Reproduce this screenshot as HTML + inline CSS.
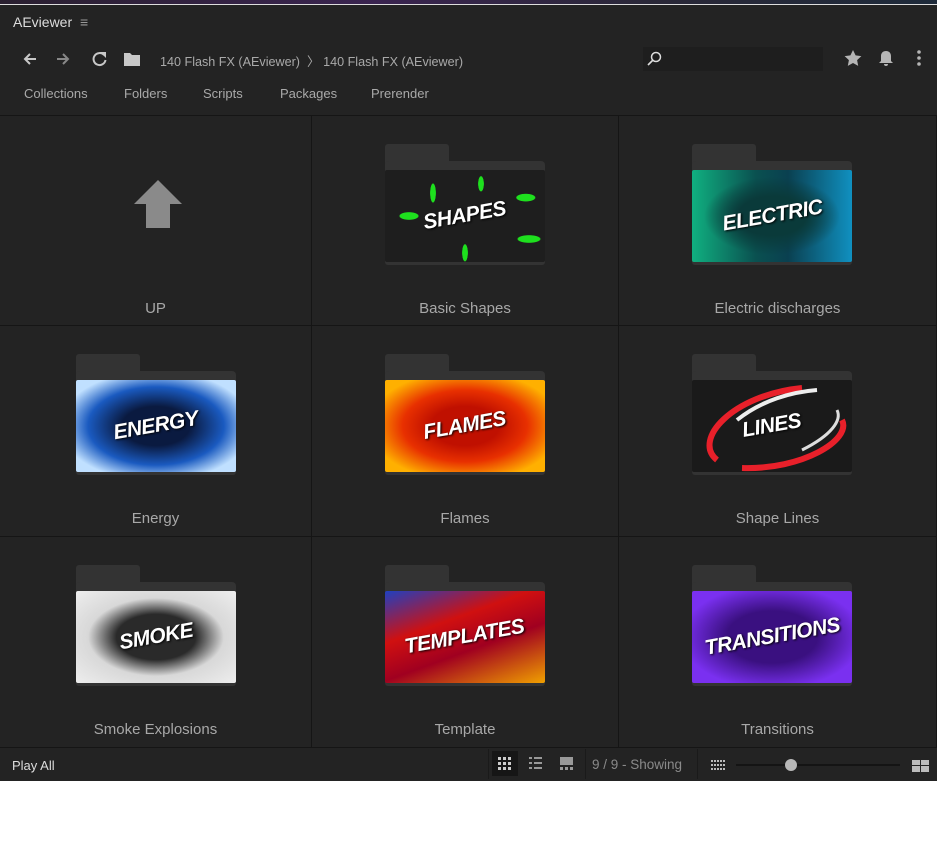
<!DOCTYPE html>
<html><head><meta charset="utf-8"><style>
*{margin:0;padding:0;box-sizing:border-box}
body{width:937px;height:863px;background:#fff;font-family:"Liberation Sans",sans-serif;position:relative;overflow:hidden}
.app{position:absolute;left:0;top:0;width:937px;height:781px;background:#232323}
.topstrip{position:absolute;left:0;top:0;width:937px;height:5px;background:linear-gradient(90deg,#2a2030,#3a2450 40%,#2a2838 70%,#1e2a3a);border-bottom:1px solid #ddd}
.t{position:absolute;color:#c8c8c8;font-size:13px;white-space:nowrap}
.nav{color:#a9a9a9;font-size:13px}
.grid{position:absolute;left:0;top:115px;width:937px;height:632px;border-top:1px solid #151515}
.cell{position:absolute;border-right:1px solid #151515;border-bottom:1px solid #151515}
.lbl{position:absolute;left:0;right:0;text-align:center;color:#a8a8a8;font-size:15px;top:184px}
.fold{position:absolute;top:28px;width:160px;height:120px}
.tab{position:absolute;left:0;top:0;width:64px;height:22px;background:#333;border-radius:3px 3px 0 0}
.tab2{position:absolute;left:0;top:17px;width:160px;height:104px;background:#333;border-radius:4px 4px 3px 3px}
.img{position:absolute;left:0;top:26px;width:160px;height:92px;border-radius:2px;overflow:hidden;display:flex;align-items:center;justify-content:center}
.img span{font-family:"Liberation Sans",sans-serif;font-weight:bold;font-style:italic;color:#fff;font-size:21px;transform:rotate(-10deg);text-shadow:1px 1px 2px #000;letter-spacing:-.5px}
.bar{position:absolute;left:0;top:747px;width:937px;height:34px;background:#232323;border-top:1px solid #151515}
</style></head><body>
<div class="app">
<div class="topstrip"></div>
<div class="t" style="left:13px;top:14px;font-size:14px;color:#ddd">AEviewer <span style="color:#999;margin-left:4px">≡</span></div>
<svg style="position:absolute;left:22px;top:50px" width="120" height="18" viewBox="0 0 120 18">
<path d="M14 9H3M8 4L3 9l5 5" stroke="#c8c8c8" stroke-width="2" fill="none"/>
<path d="M35 9h11M41 4l5 5-5 5" stroke="#888" stroke-width="2" fill="none"/>
<path d="M82 5a6 6 0 1 0 1.5 5" stroke="#c8c8c8" stroke-width="2" fill="none"/><path d="M78 2h6v6z" fill="#c8c8c8"/>
<path d="M102 3h6l2 2h8v11h-16z" fill="#c8c8c8"/>
</svg>
<div class="t nav" style="left:160px;top:51px;font-size:12.6px">140 Flash FX (AEviewer) &nbsp;〉 140 Flash FX (AEviewer)</div>
<div style="position:absolute;left:643px;top:47px;width:180px;height:24px;background:#1e1e1e"></div>
<svg style="position:absolute;left:646px;top:51px" width="16" height="16"><circle cx="10" cy="6" r="4.5" stroke="#ddd" stroke-width="1.5" fill="none"/><path d="M7 9L2 14" stroke="#ddd" stroke-width="1.6"/></svg>
<svg style="position:absolute;left:843px;top:49px" width="85" height="18">
<path d="M10 1l2.6 5.4 5.8.7-4.3 4 1.1 5.8L10 14l-5.2 2.9 1.1-5.8-4.3-4 5.8-.7z" fill="#b5b5b5"/>
<path d="M43 2c3 0 5 2 5 5v5l2 2H36l2-2V7c0-3 2-5 5-5zM41 15h4a2 2 0 0 1-4 0z" fill="#b5b5b5"/>
<circle cx="76" cy="3" r="1.8" fill="#b5b5b5"/><circle cx="76" cy="9" r="1.8" fill="#b5b5b5"/><circle cx="76" cy="15" r="1.8" fill="#b5b5b5"/>
</svg>
<div class="t nav" style="left:24px;top:86px">Collections</div>
<div class="t nav" style="left:124px;top:86px">Folders</div>
<div class="t nav" style="left:203px;top:86px">Scripts</div>
<div class="t nav" style="left:280px;top:86px">Packages</div>
<div class="t nav" style="left:371px;top:86px">Prerender</div>

<div class="grid">
<div class="cell" style="left:0;top:0;width:312px;height:210px">
<svg style="position:absolute;left:133px;top:63px" width="50" height="50"><path d="M25 1L1 25h12v24h24V25h12z" fill="#8a8a8a"/></svg>
<div class="lbl">UP</div></div>
<div class="cell" style="left:312px;top:0;width:307px;height:210px">
<div class="fold" style="left:73px"><div class="tab"></div><div class="tab2"></div><div class="img" style="background:radial-gradient(ellipse 10px 4px at 15% 50%,#1ee01e 90%,transparent),radial-gradient(ellipse 12px 4px at 90% 75%,#1ee01e 90%,transparent),radial-gradient(ellipse 10px 4px at 88% 30%,#1ee01e 90%,transparent),radial-gradient(ellipse 3px 9px at 50% 90%,#1ee01e 90%,transparent),radial-gradient(ellipse 3px 10px at 30% 25%,#1ee01e 90%,transparent),radial-gradient(ellipse 3px 8px at 60% 15%,#1ee01e 90%,transparent),#1e1e1e"><span>SHAPES</span></div></div>
<div class="lbl">Basic Shapes</div></div>
<div class="cell" style="left:619px;top:0;width:318px;height:210px">
<div class="fold" style="left:73px"><div class="tab"></div><div class="tab2"></div><div class="img" style="background:radial-gradient(ellipse at 50% 50%,#0a3a3a 30%,transparent 60%),linear-gradient(90deg,#10b080,#0a5050 40%,#0a4050 60%,#1090c0)"><span>ELECTRIC</span></div></div>
<div class="lbl">Electric discharges</div></div>
<div class="cell" style="left:0;top:210px;width:312px;height:211px">
<div class="fold" style="left:76px"><div class="tab"></div><div class="tab2"></div><div class="img" style="background:radial-gradient(ellipse at 50% 50%,#0a1a40 30%,#1a5ac0 60%,#c0e0ff 85%)"><span>ENERGY</span></div></div>
<div class="lbl">Energy</div></div>
<div class="cell" style="left:312px;top:210px;width:307px;height:211px">
<div class="fold" style="left:73px"><div class="tab"></div><div class="tab2"></div><div class="img" style="background:radial-gradient(ellipse at 50% 50%,#c01000 30%,#e83000 55%,#ffb000 85%)"><span>FLAMES</span></div></div>
<div class="lbl">Flames</div></div>
<div class="cell" style="left:619px;top:210px;width:318px;height:211px">
<div class="fold" style="left:73px"><div class="tab"></div><div class="tab2"></div><div class="img" style="background:#1a1a1a">
<svg style="position:absolute;left:0;top:0" width="160" height="92"><path d="M25 80C0 60 40 15 110 8" stroke="#e8202a" stroke-width="6" fill="none"/><path d="M45 40C70 20 100 12 125 10" stroke="#eee" stroke-width="4" fill="none"/><path d="M50 88C110 90 160 60 150 40" stroke="#e8202a" stroke-width="6" fill="none"/><path d="M110 70C140 55 150 40 145 30" stroke="#ddd" stroke-width="3" fill="none"/></svg><span style="position:relative">LINES</span></div></div>
<div class="lbl">Shape Lines</div></div>
<div class="cell" style="left:0;top:421px;width:312px;height:211px">
<div class="fold" style="left:76px"><div class="tab"></div><div class="tab2"></div><div class="img" style="background:radial-gradient(ellipse at 50% 50%,#2a2a2a 35%,#d8d8d8 60%,#eee)"><span>SMOKE</span></div></div>
<div class="lbl">Smoke Explosions</div></div>
<div class="cell" style="left:312px;top:421px;width:307px;height:211px">
<div class="fold" style="left:73px"><div class="tab"></div><div class="tab2"></div><div class="img" style="background:linear-gradient(160deg,#2040c0,#d01010 35%,#a00020 60%,#f0a000)"><span>TEMPLATES</span></div></div>
<div class="lbl">Template</div></div>
<div class="cell" style="left:619px;top:421px;width:318px;height:211px">
<div class="fold" style="left:73px"><div class="tab"></div><div class="tab2"></div><div class="img" style="background:radial-gradient(ellipse at 50% 50%,#3a1080 40%,#7a30f0 80%)"><span>TRANSITIONS</span></div></div>
<div class="lbl">Transitions</div></div>
</div>

<div class="bar">
<div class="t" style="left:12px;top:10px;color:#ddd">Play All</div>
<div style="position:absolute;left:488px;top:1px;width:1px;height:30px;background:#1a1a1a"></div>
<div style="position:absolute;left:492px;top:3px;width:26px;height:25px;background:#161616"></div>
<svg style="position:absolute;left:498px;top:9px" width="75" height="14">
<g fill="#ccc"><rect x="0" y="0" width="3" height="3"/><rect x="5" y="0" width="3" height="3"/><rect x="10" y="0" width="3" height="3"/><rect x="0" y="5" width="3" height="3"/><rect x="5" y="5" width="3" height="3"/><rect x="10" y="5" width="3" height="3"/><rect x="0" y="10" width="3" height="3"/><rect x="5" y="10" width="3" height="3"/><rect x="10" y="10" width="3" height="3"/></g>
<g fill="#999"><rect x="31" y="0" width="3" height="2"/><rect x="36" y="0" width="8" height="2"/><rect x="31" y="5" width="3" height="2"/><rect x="36" y="5" width="8" height="2"/><rect x="31" y="10" width="3" height="2"/><rect x="36" y="10" width="8" height="2"/>
<rect x="62" y="0" width="13" height="8"/><rect x="62" y="10" width="3" height="3"/><rect x="67" y="10" width="3" height="3"/><rect x="72" y="10" width="3" height="3"/></g></svg>
<div style="position:absolute;left:585px;top:1px;width:1px;height:30px;background:#1a1a1a"></div>
<div class="t" style="left:592px;top:9px;color:#8a8a8a;font-size:13.5px">9 / 9 - Showing</div>
<div style="position:absolute;left:697px;top:1px;width:1px;height:30px;background:#1a1a1a"></div>
<svg style="position:absolute;left:711px;top:12px" width="14" height="10"><g fill="#bbb"><rect x="0" y="0" width="2" height="2"/><rect x="3" y="0" width="2" height="2"/><rect x="6" y="0" width="2" height="2"/><rect x="9" y="0" width="2" height="2"/><rect x="12" y="0" width="2" height="2"/><rect x="0" y="4" width="2" height="2"/><rect x="3" y="4" width="2" height="2"/><rect x="6" y="4" width="2" height="2"/><rect x="9" y="4" width="2" height="2"/><rect x="12" y="4" width="2" height="2"/><rect x="0" y="8" width="2" height="2"/><rect x="3" y="8" width="2" height="2"/><rect x="6" y="8" width="2" height="2"/><rect x="9" y="8" width="2" height="2"/><rect x="12" y="8" width="2" height="2"/></g></svg>
<div style="position:absolute;left:736px;top:16px;width:164px;height:2px;background:#141414"></div>
<div style="position:absolute;left:785px;top:11px;width:12px;height:12px;border-radius:50%;background:#b8b8b8"></div>
<svg style="position:absolute;left:912px;top:12px" width="17" height="12"><g fill="#bbb"><rect x="0" y="0" width="8" height="5"/><rect x="9" y="0" width="8" height="5"/><rect x="0" y="6" width="8" height="6"/><rect x="9" y="6" width="8" height="6"/></g></svg>
</div>
</div>
</body></html>
